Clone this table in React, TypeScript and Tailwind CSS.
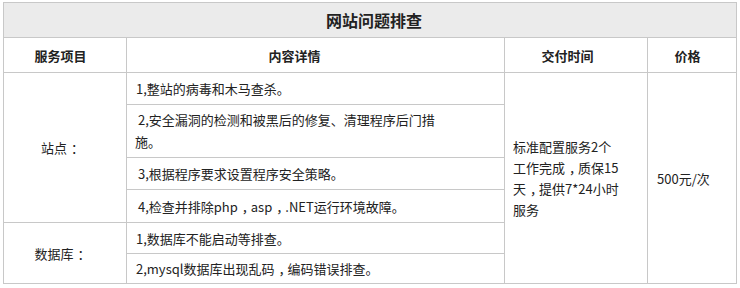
import React from "react";

const font = { fontFamily: '"Noto Sans CJK SC", "Noto Sans", sans-serif' };

function P({ c }: { c: string }) {
  return <span className="pl-[4px] tracking-[-4px]">{c}</span>;
}

export default function App() {
  const cell = "bg-white flex items-center";
  return (
    <div className="w-[740px] h-[288px] bg-white pt-[2px] pl-[3px]" style={font}>
      <div className="grid grid-cols-[122px_377px_142px_88px] grid-rows-[34px_34px_31px_52px_31px_32px_30px_29px] gap-px p-px bg-[#c8c8c8] w-[734px] text-[13px] text-[#222] leading-[21px]">
        <div className="col-span-4 bg-[#ebebeb] flex items-center justify-center pl-[8px] text-[16px] font-bold">
          网站问题排查
        </div>
        <div className={`${cell} justify-center pr-[9px] font-bold`}>服务项目</div>
        <div className={`${cell} justify-center pr-[42px] font-bold`}>内容详情</div>
        <div className={`${cell} justify-center pr-[17px] font-bold`}>交付时间</div>
        <div className={`${cell} justify-center pr-[9px] font-bold`}>价格</div>

        <div className={`${cell} row-span-4 justify-center pr-[9px]`}>
          <span>
            站点
            <P c="：" />
          </span>
        </div>
        <div className={`${cell} pl-[9px]`}>1,整站的病毒和木马查杀。</div>
        <div className="col-start-3 row-start-3 row-span-6 bg-white flex items-center pl-[8px]">
          <div>
            标准配置服务2个
            <br />
            工作完成
            <P c="，" />
            质保15
            <br />
            天<P c="，" />
            提供7*24小时
            <br />
            服务
          </div>
        </div>
        <div className="col-start-4 row-start-3 row-span-6 bg-white flex items-center pl-[9px]">
          500元/次
        </div>
        <div className={`${cell} col-start-2 row-start-4 pl-[8px]`}>
          <div className="leading-[22px]">
            {"\u00a0"}2,安全漏洞的检测和被黑后的修复、清理程序后门措
            <br />
            施。
          </div>
        </div>
        <div className={`${cell} col-start-2 row-start-5 pl-[8px]`}>{"\u00a0"}3,根据程序要求设置程序安全策略。</div>
        <div className={`${cell} col-start-2 row-start-6 pl-[8px]`}>
          <span>
            {"\u00a0"}4,检查并排除php
            <P c="，" />
            asp
            <P c="，" />
            .NET运行环境故障。
          </span>
        </div>

        <div className={`${cell} col-start-1 row-start-7 row-span-2 justify-center pr-[9px]`}>
          <span>
            数据库
            <P c="：" />
          </span>
        </div>
        <div className={`${cell} col-start-2 row-start-7 pl-[9px]`}>1,数据库不能启动等排查。</div>
        <div className={`${cell} col-start-2 row-start-8 pl-[9px]`}>
          <span>
            2,mysql数据库出现乱码
            <P c="，" />
            编码错误排查。
          </span>
        </div>
      </div>
    </div>
  );
}
